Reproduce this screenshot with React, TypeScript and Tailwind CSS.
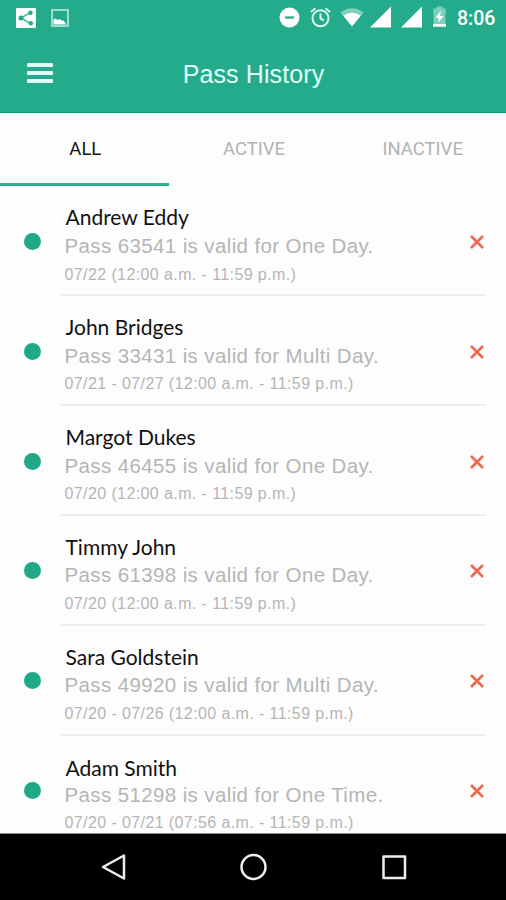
import React from 'react';

const passes = [
  { name: 'Andrew Eddy', text: 'Pass 63541 is valid for One Day.', time: '07/22 (12:00 a.m. - 11:59 p.m.)' },
  { name: 'John Bridges', text: 'Pass 33431 is valid for Multi Day.', time: '07/21 - 07/27 (12:00 a.m. - 11:59 p.m.)' },
  { name: 'Margot Dukes', text: 'Pass 46455 is valid for One Day.', time: '07/20 (12:00 a.m. - 11:59 p.m.)' },
  { name: 'Timmy John', text: 'Pass 61398 is valid for One Day.', time: '07/20 (12:00 a.m. - 11:59 p.m.)' },
  { name: 'Sara Goldstein', text: 'Pass 49920 is valid for Multi Day.', time: '07/20 - 07/26 (12:00 a.m. - 11:59 p.m.)' },
  { name: 'Adam Smith', text: 'Pass 51298 is valid for One Time.', time: '07/20 - 07/21 (07:56 a.m. - 11:59 p.m.)' },
];

const StatusBar = () => (
  <div className="flex h-9 items-center justify-between pl-4 pr-[11px] text-white">
    <div className="flex items-center gap-[15px]">
      <svg width="20" height="20" viewBox="0 0 20 20">
        <rect width="20" height="20" rx="1" fill="#fff" />
        <path d="M14.5 4.5 5 10l9.5 5.5" fill="none" stroke="#24ab8b" strokeWidth="1.4" />
        <circle cx="14.5" cy="4.7" r="2.3" fill="#24ab8b" />
        <circle cx="5" cy="10" r="2.5" fill="#24ab8b" />
        <circle cx="14.8" cy="15.3" r="2.3" fill="#24ab8b" />
      </svg>
      <svg width="18" height="18" viewBox="0 0 18 18">
        <rect x="1" y="1" width="16" height="16" fill="none" stroke="#a9e3d6" strokeWidth="1.8" />
        <path d="M2.5 15.5v-5l2-1 2 1.5 2-1 2 1.5h2l3 4z" fill="#fff" />
      </svg>
    </div>
    <div className="flex items-center">
      <svg width="180" height="24" viewBox="0 0 180 24">
        <circle cx="12.5" cy="11.5" r="10" fill="#fff" />
        <path d="M8 11.5h9" stroke="#24ab8b" strokeWidth="2.2" />
        <g fill="none" stroke="#d9fbf2" strokeWidth="2">
          <circle cx="43.5" cy="12.3" r="8" />
          <path d="M43.5 7.5v5l3.4 2.2M34 6l4.5-3.8M53 6l-4.5-3.8" />
        </g>
        <path d="M63.5 6.4Q75 -2 86.5 6.4L75 20.5z" fill="#7dd0bc" />
        <path d="M66.2 9.5Q75 4 83.8 9.5L75 20.5z" fill="#fff" />
        <path d="M93 21.5h21v-21zM124 21.5h21v-21z" fill="#fff" />
        <path d="M156.5 2.5h3v-2h6v2h3v16h-12z" fill="#7dd0bc" />
        <path d="M156 18h13v2.8h-13zM164 4.5l-5.5 7.5h3.5l-1 5 5.5-7h-3.5z" fill="#fff" />
      </svg>
      <span className="w-[38px] whitespace-nowrap pt-px font-['Roboto'] text-[19.5px] font-medium leading-6">8:06</span>
    </div>
  </div>
);

const Header = () => (
  <header className="h-[113px] shrink-0 border-b border-[#079673] bg-[#24ab8b]">
    <StatusBar />
    <div className="grid h-[74px] grid-cols-[66px_1fr_66px] items-center">
      <button className="flex flex-col gap-[4.5px] pl-[27px]">
        <span className="h-[3.5px] w-[26px] rounded-[1px] bg-[#e0fff7]" />
        <span className="h-[3.5px] w-[26px] rounded-[1px] bg-[#e0fff7]" />
        <span className="h-[3.5px] w-[26px] rounded-[1px] bg-[#e0fff7]" />
      </button>
      <h1 className="pl-px pt-0.5 text-center text-[25px] leading-8 tracking-[0.1px] text-[#e0fff7]">Pass History</h1>
    </div>
  </header>
);

const Tabs = () => (
  <nav className="grid h-[73px] shrink-0 grid-cols-3 text-center font-['Roboto'] text-[18.5px] text-[#b2b2b2]">
    <button className="border-b-3 border-[#2eae91] pl-0.5 pt-1 text-[#151515]">ALL</button>
    <button className="border-b-3 border-transparent pl-0.5 pt-1">ACTIVE</button>
    <button className="border-b-3 border-transparent pl-0.5 pt-1">INACTIVE</button>
  </nav>
);

const App = () => {
  return (
    <div className="flex h-[900px] w-[506px] flex-col overflow-hidden bg-[#fdfdfd] font-['Liberation_Sans',sans-serif]">
      <Header />
      <Tabs />
      <main className="min-h-0 flex-1 overflow-hidden">
        {passes.map((pass, idx) => (
          <div key={pass.name} className="flex h-[109.8px]">
            <div className="w-[60px] shrink-0 pl-6 pt-[47px]">
              <div className="size-[17px] rounded-full bg-[#20a989]" />
            </div>
            <div className="h-[110.4px] w-[426px] whitespace-nowrap border-b-2 border-[#efefef] pl-[5.5px]">
              <h2
                className="h-[45px] font-['Lato'] text-[21px] leading-7 text-[#111111]"
                style={{ paddingTop: 16.6 + idx * 0.4 }}
              >
                {pass.name}
              </h2>
              <p className="-ml-px text-[20.5px] leading-[30px] tracking-[0.38px] text-[#b5b5b5]">{pass.text}</p>
              <p className="-ml-px pt-[0.5px] text-[16px] leading-[26px] tracking-[0.4px] text-[#b5b5b5]">{pass.time}</p>
            </div>
            <button className="-ml-4 h-fit pt-[49px]">
              <svg width="14" height="14" viewBox="0 0 14 14">
                <path d="m1 1 12 12M13 1 1 13" stroke="#ed6a50" strokeWidth="2.7" />
              </svg>
            </button>
          </div>
        ))}
      </main>
      <footer className="flex h-[67px] shrink-0 items-center justify-center border-t border-[#888888] bg-black">
        <svg width="310" height="30" viewBox="98 0 310 30" fill="none" stroke="#eeeeee" strokeWidth="2.5" strokeLinejoin="round">
          <path d="M124 3.5v23L103 15z" />
          <circle cx="253.5" cy="15" r="12" />
          <rect x="383.5" y="4.5" width="21.5" height="21.5" />
        </svg>
      </footer>
    </div>
  );
};

export default App;
